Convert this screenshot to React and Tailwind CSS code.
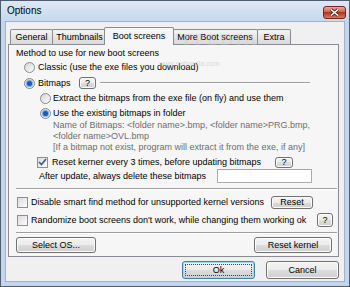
import React from "react";

const FONT = "font-['Liberation_Sans',Arial,sans-serif]";

function Radio({ checked }) {
  return (
    <span className="w-[11px] h-[11px] rounded-full border border-[#8a8a8a] bg-[linear-gradient(135deg,#d6d6d6,#fbfbfb)] flex items-center justify-center shrink-0">
      {checked && (
        <span className="w-[5px] h-[5px] rounded-full bg-[#1c5cb5] shadow-[0_0_1px_1px_#6aa6e8]" />
      )}
    </span>
  );
}

function Check({ checked }) {
  return (
    <span className="w-[11px] h-[11px] border border-[#8e8f8f] bg-[linear-gradient(135deg,#dcdcdc,#fdfdfd)] flex items-center justify-center shrink-0">
      {checked && (
        <svg width="9" height="8" viewBox="0 0 9 8">
          <path d="M1 4 L3.5 6.5 L8 1" fill="none" stroke="#3a5a96" strokeWidth="1.7" />
        </svg>
      )}
    </span>
  );
}

function Btn({ children, className = "" }) {
  return (
    <div
      className={
        "flex items-center justify-center border border-[#707070] rounded-[3px] bg-[linear-gradient(#f3f3f3,#ebebeb_50%,#dddddd_50%,#cfcfcf)] shadow-[inset_0_0_0_1px_#fcfcfc] shrink-0 " +
        className
      }
    >
      {children}
    </div>
  );
}

function Tab({ children, className = "", selected }) {
  if (selected) {
    return (
      <div
        className={
          "relative z-10 h-[18px] -mb-px border border-b-0 border-[#898c95] bg-[#f6f6f6] flex items-center justify-center rounded-t-[2px] " +
          className
        }
      >
        {children}
      </div>
    );
  }
  return (
    <div
      className={
        "h-[15px] border border-b-0 border-[#898c95] bg-[linear-gradient(#f4f4f4,#e6e6e6_50%,#dadada)] flex items-center justify-center rounded-t-[2px] " +
        className
      }
    >
      {children}
    </div>
  );
}

export default function App() {
  return (
    <div
      className={
        "w-[350px] h-[287px] bg-[#c4d6eb] border border-[#4f5c6c] flex flex-col text-[9px] leading-none text-black overflow-hidden relative " +
        FONT
      }
    >
      {/* title bar */}
      <div className="h-[20px] flex items-center justify-between pl-[6px] pr-[3px] bg-[linear-gradient(#dce8f5,#c7d9ee)]">
        <span className="text-[10px] text-black">Options</span>
        <div className="w-[23px] h-[13px] mt-[2px] rounded-[3px] border border-[#6e2a20] bg-[linear-gradient(#e9a99d,#cf5a45_50%,#b8301b_50%,#d27d6a)] flex items-center justify-center">
          <svg width="11" height="9" viewBox="0 0 11 9">
            <path d="M2 1.5 L9 7.5 M9 1.5 L2 7.5" stroke="#5a1f17" strokeWidth="3" />
            <path d="M2 1.5 L9 7.5 M9 1.5 L2 7.5" stroke="#ffffff" strokeWidth="1.6" />
          </svg>
        </div>
      </div>

      {/* client */}
      <div className="flex-1 mx-[4px] mb-[4px] bg-[#f0f0f0] border border-[#9fb2c8] flex flex-col">
        {/* tabs */}
        <div className="mt-[5px] h-[17px] pl-[4px] flex items-end">
          <Tab className="w-[43px]">General</Tab>
          <Tab className="w-[55px] -ml-px">Thumbnails</Tab>
          <Tab selected className="w-[70px] -ml-[3px]">Boot screens</Tab>
          <Tab className="w-[86px] -ml-[2px]">More Boot screens</Tab>
          <Tab className="w-[34px] -ml-px">Extra</Tab>
        </div>

        {/* panel */}
        <div className="ml-[2px] w-[331px] h-[213px] border border-[#898c95] bg-[#f6f6f6] flex flex-col">
          <div className="mt-px h-[14px] pl-[7px] flex items-center">
            Method to use for new boot screens
          </div>
          <div className="h-[14px] pl-[15px] flex items-center gap-[3px]">
            <Radio />
            <span>Classic (use the exe files you download)</span>
          </div>
          <div className="mt-px h-[16px] pl-[15px] flex items-center">
            <Radio checked />
            <span className="ml-[3px] w-[41px]">Bitmaps</span>
            <Btn className="w-[17px] h-[12px]">?</Btn>
            <div className="ml-[4px] w-[210px] border-t border-[#a0a0a0] border-b border-b-white" />
          </div>
          <div className="h-[15px] pl-[31px] flex items-center gap-[2px]">
            <Radio />
            <span>Extract the bitmaps from the exe file (on fly) and use them</span>
          </div>
          <div className="h-[14px] pl-[31px] flex items-center gap-[2px]">
            <Radio checked />
            <span>Use the existing bitmaps in folder</span>
          </div>
          <div className="pl-[44px] text-[#6d6d6d] flex flex-col">
            <div className="h-[11px] flex items-center">
              Name of Bitmaps: &lt;folder name&gt;.bmp, &lt;folder name&gt;PRG.bmp,
            </div>
            <div className="h-[11px] flex items-center">&lt;folder name&gt;OVL.bmp</div>
            <div className="h-[11px] flex items-center">
              [If a bitmap not exist, program will extract it from the exe, if any]
            </div>
          </div>
          <div className="mt-[2px] h-[14px] pl-[28px] flex items-center">
            <Check checked />
            <span className="ml-[4px] w-[223px] whitespace-nowrap">
              Reset kerner every 3 times, before updating bitmaps
            </span>
            <Btn className="w-[18px] h-[11px]">?</Btn>
          </div>
          <div className="h-[14px] pl-[30px] flex items-center">
            <span className="w-[178px] whitespace-nowrap">After update, always delete these bitmaps</span>
            <div className="w-[95px] h-[14px] bg-white border border-[#abadb3] border-t-[#a3a3a3]" />
          </div>
          <div className="mt-[5px] ml-[7px] w-[321px] border-t border-[#a0a0a0] border-b border-b-white" />
          <div className="mt-[4px] h-[16px] pl-[8px] flex items-center">
            <Check />
            <span className="ml-[3px] w-[240px] whitespace-nowrap">
              Disable smart find method for unsupported kernel versions
            </span>
            <Btn className="w-[42px] h-[13px]">Reset</Btn>
          </div>
          <div className="mt-[2px] h-[16px] pl-[8px] flex items-center">
            <Check />
            <span className="ml-[3px] w-[286px] whitespace-nowrap">
              Randomize boot screens don't work, while changing them working ok
            </span>
            <Btn className="w-[16px] h-[14px]">?</Btn>
          </div>
          <div className="mt-[4px] ml-[7px] w-[321px] border-t border-[#a0a0a0] border-b border-b-white" />
          <div className="mt-[3px] h-[16px] pl-[7px] pr-[6px] flex items-center justify-between">
            <Btn className="w-[80px] h-[16px]">Select OS...</Btn>
            <Btn className="w-[78px] h-[16px]">Reset kernel</Btn>
          </div>
        </div>

        {/* dialog buttons */}
        <div className="mt-[4px] pr-[5px] flex justify-end gap-[11px]">
          <div className="w-[73px] h-[18px] rounded-[3px] border border-[#3c7fb1] bg-[linear-gradient(#f3f3f3,#ebebeb_50%,#dddddd_50%,#cfcfcf)] shadow-[inset_0_0_0_1px_#9fdcf5] flex items-center justify-center p-[2px]">
            <div className="w-full h-full border border-dotted border-[#444] flex items-center justify-center">
              Ok
            </div>
          </div>
          <Btn className="w-[73px] h-[18px]">Cancel</Btn>
        </div>
      </div>

      {/* watermark */}
      <div className="absolute left-[140px] top-[30px] pointer-events-none text-[17px] font-['Liberation_Serif',serif] tracking-[3px] text-[#c8c8c8] opacity-40 leading-none">
        SOFTPEDIA
      </div>
      <div className="absolute left-[158px] top-[59px] pointer-events-none text-[7px] text-[#c8c8c8] opacity-60 leading-none">
        www.softpedia.com
      </div>
    </div>
  );
}
